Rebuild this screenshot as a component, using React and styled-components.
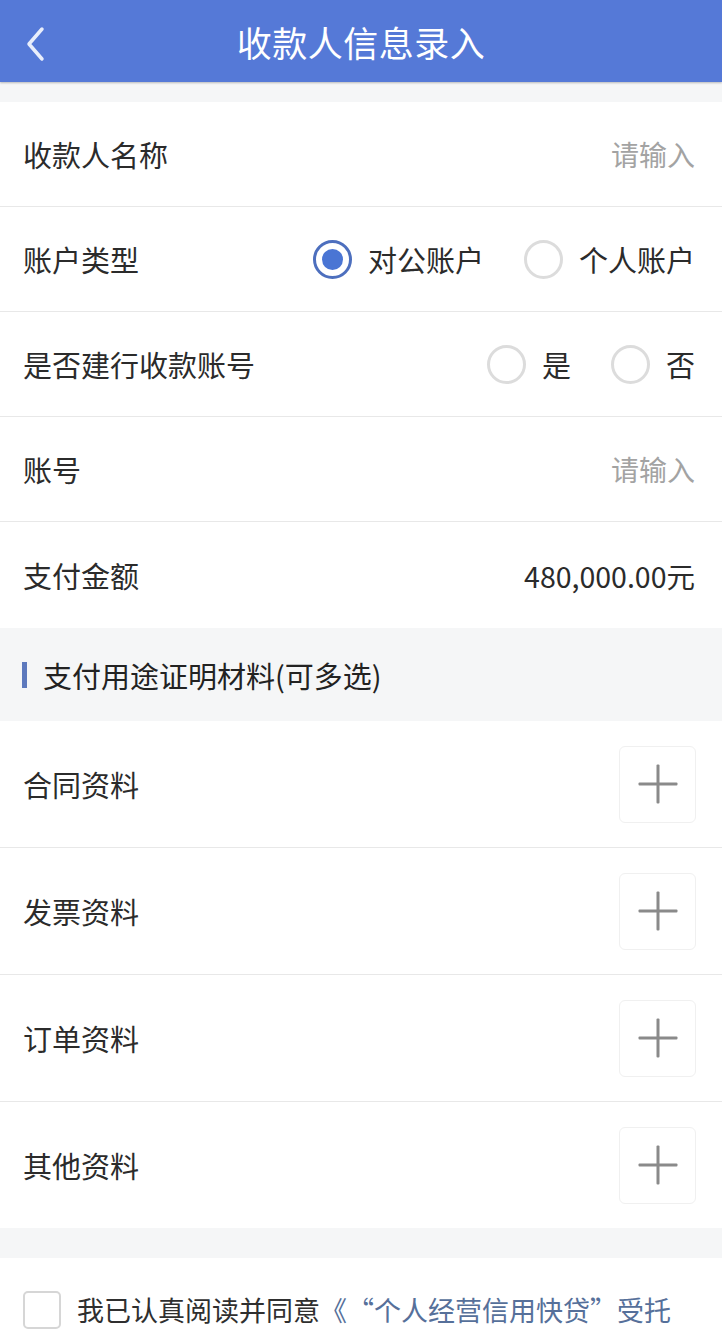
import React from 'react'
import styled, { createGlobalStyle } from 'styled-components'

const GlobalStyle = createGlobalStyle`
  body {
    margin: 0;
    background: #ffffff;
    font-family: "Noto Sans CJK SC", "Noto Sans", sans-serif;
  }
`

const Page = styled.div`
  width: 722px;
  height: 1342px;
  overflow: hidden;
  background: #ffffff;
`
const Header = styled.div`
  position: relative;
  height: 82px;
  background: #5579d7;
  display: flex;
  align-items: center;
  justify-content: center;
  box-shadow: 0 1px 2px rgba(0, 0, 0, 0.25);
`
const Back = styled.div`
  position: absolute;
  left: 22px;
  top: 24px;
  width: 30px;
  height: 40px;
`
const Title = styled.h1`
  margin: 0;
  font-size: 35px;
  font-weight: 400;
  color: #ffffff;
  letter-spacing: 0.5px;
`
const Gap = styled.div`
  height: ${(p) => p.h}px;
  background: #f5f6f7;
`
const Row = styled.div`
  height: ${(p) => p.h || 104}px;
  padding: 0 27px 0 23px;
  display: flex;
  align-items: center;
  justify-content: space-between;
  border-bottom: ${(p) => (p.last ? 'none' : '1px solid #e8e8e8')};
`
const Label = styled.span`
  font-size: 29px;
  color: #2b2b2b;
`
const Placeholder = styled.span`
  font-size: 28px;
  color: #a3a3a3;
`
const Amount = styled.span`
  font-size: 28.5px;
  color: #2b2b2b;
`
const Options = styled.div`
  display: flex;
  align-items: center;
  gap: 40px;
`
const Option = styled.label`
  display: flex;
  align-items: center;
  gap: 16px;
  font-size: 29px;
  color: #2b2b2b;
`
const Radio = styled.span`
  width: 39px;
  height: 39px;
  box-sizing: border-box;
  border-radius: 50%;
  border: 3px solid ${(p) => (p.checked ? '#4d6fbe' : '#dcdcdc')};
  display: flex;
  align-items: center;
  justify-content: center;
  &::after {
    content: '';
    width: 21px;
    height: 21px;
    border-radius: 50%;
    background: ${(p) => (p.checked ? '#4a75d4' : 'transparent')};
  }
`
const Section = styled.div`
  height: 93px;
  background: #f5f6f7;
  display: flex;
  align-items: center;
  padding-left: 22px;
  gap: 16px;
`
const Bar = styled.span`
  width: 5px;
  height: 26px;
  background: #5d79bd;
`
const SectionTitle = styled.span`
  font-size: 29px;
  color: #222222;
`
const AddBox = styled.div`
  width: 77px;
  height: 77px;
  box-sizing: border-box;
  border: 1px solid #f0f0f0;
  border-radius: 6px;
  margin-right: -1px;
  position: relative;
  &::before,
  &::after {
    content: '';
    position: absolute;
    left: 50%;
    top: 50%;
    background: #8a8a8a;
    border-radius: 1px;
  }
  &::before {
    width: 39px;
    height: 3px;
    transform: translate(-50%, -50%);
  }
  &::after {
    width: 3px;
    height: 39px;
    transform: translate(-50%, -50%);
  }
`
const Agree = styled.div`
  display: flex;
  align-items: center;
  padding: 32px 0 0 23px;
  gap: 16px;
  white-space: nowrap;
`
const Check = styled.span`
  width: 38px;
  height: 38px;
  box-sizing: border-box;
  border: 2px solid #d6d6d6;
  border-radius: 5px;
  flex-shrink: 0;
`
const AgreeText = styled.span`
  font-size: 27px;
  color: #2f2f2f;
`
const Link = styled.span`
  color: #56709a;
`
const Quote = styled.span`
  display: inline-block;
  width: 1em;
  text-align: ${(p) => p.align};
`

const uploads = ['合同资料', '发票资料', '订单资料', '其他资料']

export default function App() {
  return (
    <Page>
      <GlobalStyle />
      <Header>
        <Back>
          <svg width="30" height="40" viewBox="0 0 30 40">
            <path d="M20 5 L7 20 L20 35" fill="none" stroke="#e9eefb" strokeWidth="3.5" strokeLinecap="round" strokeLinejoin="round" />
          </svg>
        </Back>
        <Title>收款人信息录入</Title>
      </Header>
      <Gap h={20} />
      <Row>
        <Label>收款人名称</Label>
        <Placeholder>请输入</Placeholder>
      </Row>
      <Row>
        <Label>账户类型</Label>
        <Options>
          <Option>
            <Radio checked />
            对公账户
          </Option>
          <Option>
            <Radio />
            个人账户
          </Option>
        </Options>
      </Row>
      <Row>
        <Label>是否建行收款账号</Label>
        <Options>
          <Option>
            <Radio />
            是
          </Option>
          <Option>
            <Radio />
            否
          </Option>
        </Options>
      </Row>
      <Row>
        <Label>账号</Label>
        <Placeholder>请输入</Placeholder>
      </Row>
      <Row last h={106}>
        <Label>支付金额</Label>
        <Amount>480,000.00元</Amount>
      </Row>
      <Section>
        <Bar />
        <SectionTitle>支付用途证明材料(可多选)</SectionTitle>
      </Section>
      {uploads.map((u, i) => (
        <Row key={u} h={126} last={i === uploads.length - 1}>
          <Label>{u}</Label>
          <AddBox />
        </Row>
      ))}
      <Gap h={30} />
      <Agree>
        <Check />
        <AgreeText>
          我已认真阅读并同意
          <Link>
            《<Quote align="right">“</Quote>个人经营信用快贷<Quote align="left">”</Quote>受托
          </Link>
        </AgreeText>
      </Agree>
    </Page>
  )
}
